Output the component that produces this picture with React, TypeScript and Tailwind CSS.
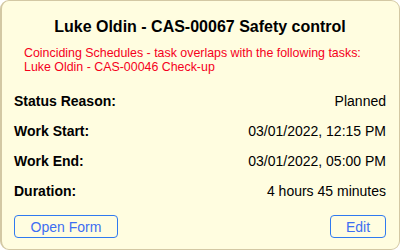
import React from "react";

const rows: [string, string][] = [
  ["Status Reason:", "Planned"],
  ["Work Start:", "03/01/2022, 12:15 PM"],
  ["Work End:", "03/01/2022, 05:00 PM"],
  ["Duration:", "4 hours 45 minutes"],
];

export default function App() {
  return (
    <div
      className="w-[400px] h-[250px] bg-white"
      style={{ fontFamily: '"Liberation Sans", Arial, sans-serif' }}
    >
      <div className="w-[400px] h-[250px] rounded-[9px] border border-[#d3c8a4] border-l-2 bg-[#fffde0] flex flex-col pl-[12px] pr-[13px] pt-[16px]">
        <div className="text-[16px] leading-[20px] font-bold text-black text-center">
          Luke Oldin - CAS-00067 Safety control
        </div>
        <div className="mt-[9px] pl-[10px] text-[12.4px] leading-[14px] text-[#f5001c]">
          <div>Coinciding Schedules - task overlaps with the following tasks:</div>
          <div>Luke Oldin - CAS-00046 Check-up</div>
        </div>
        <div className="mt-[12px] flex flex-col">
          {rows.map(([label, value]) => (
            <div key={label} className="h-[30px] flex items-center justify-between text-[14px] leading-[16px] text-black">
              <span className="font-bold">{label}</span>
              <span>{value}</span>
            </div>
          ))}
        </div>
        <div className="mt-[9px] flex justify-between">
          <button className="w-[104px] h-[23px] rounded-[4px] border border-[#2f7af0] text-[#3d6ef2] text-[14px] leading-[16px] flex items-center justify-center">
            Open Form
          </button>
          <button className="w-[56px] h-[23px] rounded-[4px] border border-[#2f7af0] text-[#3d6ef2] text-[14px] leading-[16px] flex items-center justify-center">
            Edit
          </button>
        </div>
      </div>
    </div>
  );
}
